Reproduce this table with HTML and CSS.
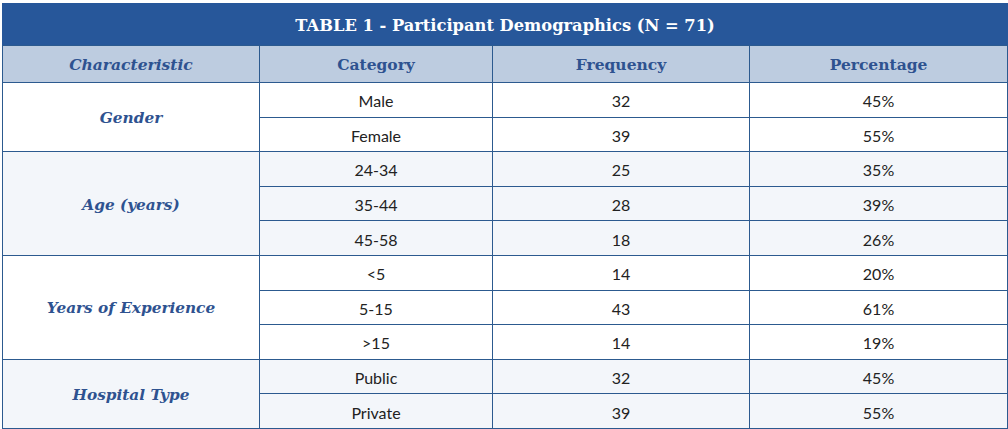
FILE: index.html
```html
<!DOCTYPE html>
<html>
<head>
<meta charset="utf-8">
<link rel="stylesheet" href="styles.css">
</head>
<body>
<div class="wrap">
<table class="demo">
<colgroup>
<col class="c1"><col class="c2"><col class="c3"><col class="c4">
</colgroup>
<thead>
<tr class="title-row"><th colspan="4" class="title">TABLE 1 - Participant Demographics (N = 71)</th></tr>
<tr class="head-row">
<th class="h-char">Characteristic</th>
<th>Category</th>
<th>Frequency</th>
<th>Percentage</th>
</tr>
</thead>
<tbody class="g-white">
<tr><td rowspan="2" class="char">Gender</td><td>Male</td><td>32</td><td>45%</td></tr>
<tr><td>Female</td><td>39</td><td>55%</td></tr>
</tbody>
<tbody class="g-tint">
<tr><td rowspan="3" class="char">Age (years)</td><td>24-34</td><td>25</td><td>35%</td></tr>
<tr><td>35-44</td><td>28</td><td>39%</td></tr>
<tr><td>45-58</td><td>18</td><td>26%</td></tr>
</tbody>
<tbody class="g-white">
<tr><td rowspan="3" class="char">Years of Experience</td><td>&lt;5</td><td>14</td><td>20%</td></tr>
<tr><td>5-15</td><td>43</td><td>61%</td></tr>
<tr><td>&gt;15</td><td>14</td><td>19%</td></tr>
</tbody>
<tbody class="g-tint">
<tr><td rowspan="2" class="char">Hospital Type</td><td>Public</td><td>32</td><td>45%</td></tr>
<tr><td>Private</td><td>39</td><td>55%</td></tr>
</tbody>
</table>
</div>
</body>
</html>
```
FILE: styles.css
```css
html, body {
  margin: 0;
  padding: 0;
  background: #ffffff;
}
.wrap {
  padding: 3px 1px 0 2px;
}
.demo {
  width: 1005px;
  border-collapse: collapse;
  table-layout: fixed;
  font-family: "Lato", "Liberation Sans", sans-serif;
  font-size: 16px;
  color: #222222;
}
.c1 { width: 257px; }
.c2 { width: 233px; }
.c3 { width: 257px; }
.c4 { width: 258px; }
.demo th, .demo td {
  border: 1px solid #2c5a8f;
  text-align: center;
  padding: 0;
}
.title-row th {
  background: #27579a;
  color: #ffffff;
  font-family: "DejaVu Serif", "Liberation Serif", serif;
  font-weight: bold;
  font-size: 16.3px;
  height: 40px;
  padding-top: 1px;
  border-color: #27579a;
  border-bottom-color: #2c5a8f;
}
.head-row th {
  background: #bdcce0;
  color: #2e5290;
  font-family: "DejaVu Serif", "Liberation Serif", serif;
  font-weight: bold;
  font-size: 15.5px;
  height: 35px;
  padding-top: 1px;
}
.head-row .h-char {
  font-style: italic;
}
.demo td {
  height: 31.6px;
  padding-top: 2px;
}
.demo td.char {
  color: #2e5290;
  font-family: "DejaVu Serif", "Liberation Serif", serif;
  font-weight: bold;
  font-style: italic;
  font-size: 15.3px;
}
.g-white td { background: #ffffff; }
.g-tint td { background: #f3f6fa; }
```
